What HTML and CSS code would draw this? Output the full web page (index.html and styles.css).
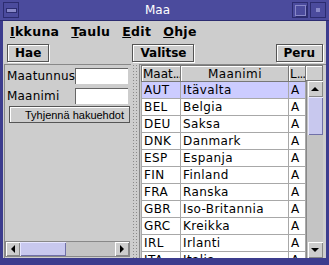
FILE: index.html
```html
<!DOCTYPE html>
<html lang="fi">
<head>
    <meta charset="UTF-8">
    <title>Maa</title>
    <link rel="stylesheet" href="styles.css">
</head>
<body>
    <div class="window">
        <div class="titlebar">
            <span class="tb-btn"><span class="dash"></span></span>
            <span class="title">Maa</span>
            <span class="tb-btn"><span class="square"></span></span>
            <span class="tb-btn"><span class="dot"></span></span>
        </div>
        <div class="client">
            <div class="menubar">
                <span class="menu-item"><u>I</u>kkuna</span>
                <span class="menu-item"><u>T</u>aulu</span>
                <span class="menu-item"><u>E</u>dit</span>
                <span class="menu-item"><u>O</u>hje</span>
            </div>
            <div class="toolbar">
                <button class="tool-button">Hae</button>
                <button class="tool-button">Valitse</button>
                <button class="tool-button">Peru</button>
            </div>
            <div class="split">
                <div class="left">
                    <div class="left-view">
                        <div class="form-row">
                            <span class="label">Maatunnus</span>
                            <span class="field"></span>
                        </div>
                        <div class="form-row">
                            <span class="label">Maanimi</span>
                            <span class="field"></span>
                        </div>
                        <button class="clear-button">Tyhjennä hakuehdot</button>
                    </div>
                    <div class="hscroll">
                        <span class="arrow-box"><span class="arrow-left"></span></span>
                        <span class="hthumb"></span>
                        <span class="htrack"></span>
                        <span class="arrow-box"><span class="arrow-right"></span></span>
                    </div>
                </div>
                <div class="divider"></div>
                <div class="right">
                    <table class="grid">
                        <colgroup>
                            <col class="c1"><col class="c2"><col class="c3">
                        </colgroup>
                        <thead>
                            <tr>
                                <th class="left-head">Maat<span class="dots">...</span></th>
                                <th>Maanimi</th>
                                <th class="left-head">L<span class="dots">...</span></th>
                            </tr>
                        </thead>
                        <tbody id="rows"></tbody>
                    </table>
                    <div class="vscroll-col">
                        <div class="corner"></div>
                        <div class="vscroll">
                            <span class="arrow-box"><span class="arrow-up"></span></span>
                            <span class="vthumb"></span>
                            <span class="vtrack"></span>
                            <span class="arrow-box"><span class="arrow-down"></span></span>
                        </div>
                    </div>
                </div>
            </div>
        </div>
    </div>

    <script>
        const countries = [
            ['AUT', 'Itävalta'],
            ['BEL', 'Belgia'],
            ['DEU', 'Saksa'],
            ['DNK', 'Danmark'],
            ['ESP', 'Espanja'],
            ['FIN', 'Finland'],
            ['FRA', 'Ranska'],
            ['GBR', 'Iso-Britannia'],
            ['GRC', 'Kreikka'],
            ['IRL', 'Irlanti'],
            ['ITA', 'Italia']
        ];

        const tbody = document.getElementById('rows');
        countries.forEach((c, index) => {
            const tr = document.createElement('tr');
            if (index === 0) tr.className = 'selected';
            tr.innerHTML = `<td>${c[0]}</td><td>${c[1]}</td><td>A</td>`;
            tbody.appendChild(tr);
        });
    </script>
</body>
</html>
```

FILE: styles.css
```css
body {
    margin: 0;
    font-family: 'DejaVu Sans', sans-serif;
    font-size: 12px;
    color: #000;
}

.window {
    width: 329px;
    height: 265px;
    background-color: #3c3c8e;
    display: flex;
    flex-direction: column;
    overflow: hidden;
}

.titlebar {
    height: 21px;
    flex-shrink: 0;
    display: flex;
    align-items: center;
    padding: 0 3px;
    background-color: #4b4b9d;
    border-bottom: 1px solid #2c2c70;
    box-sizing: border-box;
}

.title {
    flex: 1;
    text-align: center;
    color: #fff;
    font-size: 12px;
    padding-left: 4px;
}

.tb-btn {
    width: 16px;
    height: 16px;
    border: 1px solid #2c2c70;
    box-sizing: border-box;
    display: flex;
    align-items: center;
    justify-content: center;
    background-color: #4b4b9d;
}

.tb-btn + .tb-btn {
    margin-left: 2px;
}

.dash {
    width: 9px;
    height: 3px;
    background-color: #8888c8;
    border: 1px solid #2c2c70;
}

.square {
    width: 9px;
    height: 9px;
    border: 1px solid #8888c8;
    box-shadow: 1px 1px 0 #2c2c70;
}

.dot {
    width: 4px;
    height: 4px;
    background-color: #8888c8;
}

.client {
    height: 237px;
    margin: 0 3px;
    background-color: #cdcdcd;
    display: flex;
    flex-direction: column;
}

.menubar {
    height: 21px;
    flex-shrink: 0;
    display: flex;
    align-items: center;
    padding-left: 2px;
    gap: 2px;
}

.menu-item {
    font-weight: bold;
    font-size: 12.5px;
    padding: 0 5px;
    letter-spacing: 0.3px;
}

.toolbar {
    height: 22px;
    flex-shrink: 0;
    display: flex;
    justify-content: space-between;
    align-items: center;
    padding: 0 3px 0 4px;
}

.tool-button {
    font-family: 'DejaVu Sans', sans-serif;
    font-weight: bold;
    font-size: 12px;
    height: 18px;
    padding: 0 7px;
    background-color: #cdcdcd;
    border: 1px solid #555;
    box-shadow: inset 1px 1px 0 #fff, 1px 1px 0 #fff;
    border-radius: 0;
    color: #000;
}

.tool-button:nth-child(2) {
    margin-left: 2px;
}

.split {
    height: 194px;
    display: flex;
}

.left {
    width: 127px;
    margin-left: 1px;
    box-sizing: border-box;
    border-top: 1px solid #888;
    border-left: 1px solid #888;
    display: flex;
    flex-direction: column;
}

.left-view {
    flex: 1;
    padding: 3px 0 0 2px;
}

.form-row {
    display: flex;
    align-items: center;
    height: 16px;
    margin-bottom: 4px;
}

.label {
    width: 68px;
    font-size: 12px;
    letter-spacing: 0.2px;
}

.field {
    width: 53px;
    height: 16px;
    background-color: #fff;
    border-top: 1px solid #666;
    border-left: 1px solid #666;
    box-sizing: border-box;
}

.clear-button {
    display: block;
    width: 121px;
    height: 17px;
    margin: -2px 0 0 2px;
    padding: 0 0 0 10px;
    font-family: 'Liberation Sans', sans-serif;
    font-size: 11px;
    background-color: #cdcdcd;
    border: 1px solid #555;
    box-shadow: inset 1px 1px 0 #fff;
    border-radius: 0;
    text-align: center;
    color: #000;
}

.hscroll {
    height: 16px;
    margin: 0 1px 1px 0;
    box-sizing: border-box;
    display: flex;
    border: 1px solid #888;
    background-color: #c4c4c4;
}

.arrow-box {
    width: 14px;
    height: 14px;
    background-color: #cdcdcd;
    box-shadow: inset 1px 1px 0 #fff, inset -1px -1px 0 #888;
    display: flex;
    align-items: center;
    justify-content: center;
    flex-shrink: 0;
}

.arrow-left, .arrow-right, .arrow-up, .arrow-down {
    width: 0;
    height: 0;
    border: 4px solid transparent;
}

.arrow-left {
    border-right-color: #000;
    border-left-width: 0;
}

.arrow-right {
    border-left-color: #000;
    border-right-width: 0;
}

.arrow-up {
    border-bottom-color: #000;
    border-top-width: 0;
}

.arrow-down {
    border-top-color: #000;
    border-bottom-width: 0;
}

.hthumb, .vthumb {
    flex-shrink: 0;
    background-color: #c8c8ee;
    background-image: radial-gradient(#8c8cc4 35%, transparent 40%);
    background-size: 2px 2px;
    box-shadow: inset 1px 1px 0 #e6e6ff, inset -1px -1px 0 #7070a8;
}

.hthumb {
    width: 46px;
}

.htrack, .vtrack {
    flex: 1;
}

.divider {
    width: 8px;
    background-color: #cdcdcd;
    background-image: radial-gradient(#8a8a8a 30%, transparent 40%);
    background-size: 3px 3px;
    background-position: 1px 0;
}

.right {
    flex: 1;
    display: flex;
    overflow: hidden;
    border-top: 1px solid #888;
    border-left: 1px solid #888;
    padding: 0 4px 0 1px;
}

.grid {
    border-collapse: collapse;
    table-layout: fixed;
    width: 164px;
    background-color: #fff;
    align-self: flex-start;
    letter-spacing: 0.4px;
}

.grid col.c1 {
    width: 39px;
}

.grid col.c2 {
    width: 108px;
}

.grid col.c3 {
    width: 17px;
}

.grid th {
    height: 15px;
    padding: 0 0 0 1px;
    font-weight: normal;
    background-color: #cdcdcd;
    border: 1px solid #777;
    box-shadow: inset 1px 1px 0 #fff;
    white-space: nowrap;
    overflow: hidden;
}

.grid th.left-head {
    text-align: left;
    letter-spacing: 0;
}

.dots {
    letter-spacing: -1px;
}

.grid td {
    height: 16px;
    padding: 0 0 0 2px;
    border: 1px solid #a8a8a8;
    white-space: nowrap;
    overflow: hidden;
}

.grid tr.selected td {
    background-color: #ccccff;
}

.vscroll-col {
    width: 17px;
    flex-shrink: 0;
    display: flex;
    flex-direction: column;
}

.corner {
    height: 16px;
    box-sizing: border-box;
    background-color: #cdcdcd;
    border: 1px solid #777;
    border-left: none;
    box-shadow: inset 1px 1px 0 #fff;
}

.vscroll {
    flex: 1;
    display: flex;
    flex-direction: column;
    align-items: center;
    background-color: #c4c4c4;
    border-left: 1px solid #888;
}

.vscroll .arrow-box {
    width: 15px;
    height: 16px;
}

.vthumb {
    width: 15px;
    height: 38px;
}
```
